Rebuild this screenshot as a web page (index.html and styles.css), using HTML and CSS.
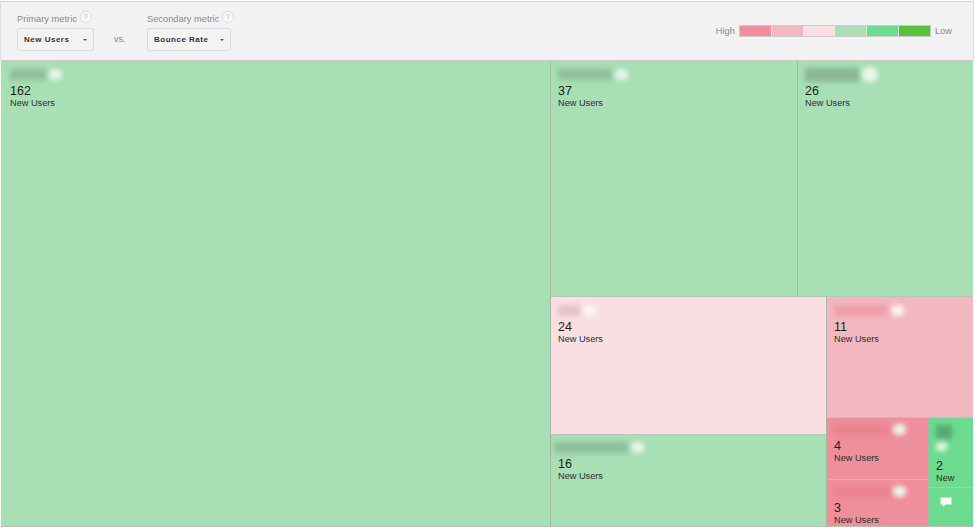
FILE: index.html
```html
<!DOCTYPE html>
<html lang="en">
<head>
<meta charset="utf-8">
<title>Treemap</title>
<link rel="stylesheet" href="styles.css">
</head>
<body>
<div class="app">
  <header class="toolbar">
    <div class="metric metric-primary">
      <div class="metric-label">Primary metric <span class="help">?</span></div>
      <div class="select select-primary">New Users <i class="caret"></i></div>
    </div>
    <div class="vs">vs.</div>
    <div class="metric">
      <div class="metric-label">Secondary metric <span class="help">?</span></div>
      <div class="select select-secondary">Bounce Rate <i class="caret"></i></div>
    </div>
    <div class="legend">
      <span>High</span>
      <div class="scale"><i class="s1"></i><i class="s2"></i><i class="s3"></i><i class="s4"></i><i class="s5"></i><i class="s6"></i></div>
      <span>Low</span>
    </div>
  </header>
  <main class="map">
    <section class="cell green big">
      <div class="blur"><i class="bar b-a g"></i><i class="dot"></i></div>
      <div class="num">162</div><div class="unit">New Users</div>
    </section>
    <div class="right">
      <div class="row top">
        <section class="cell green c37">
          <div class="blur"><i class="bar b-b g"></i><i class="dot"></i></div>
          <div class="num">37</div><div class="unit">New Users</div>
        </section>
        <section class="cell green c26">
          <div class="blur"><i class="bar b-b g2"></i><i class="dot dot-l"></i></div>
          <div class="num">26</div><div class="unit">New Users</div>
        </section>
      </div>
      <div class="row lower">
        <div class="col mid">
          <section class="cell pale c24">
            <div class="blur"><i class="bar b-c p"></i><i class="dot dot-f"></i></div>
            <div class="num">24</div><div class="unit">New Users</div>
          </section>
          <section class="cell green c16">
            <div class="blur shift"><i class="bar b-d g"></i><i class="dot"></i></div>
            <div class="num">16</div><div class="unit">New Users</div>
          </section>
        </div>
        <div class="col side">
          <section class="cell rose c11">
            <div class="blur"><i class="bar b-b r"></i><i class="dot dot-f"></i></div>
            <div class="num">11</div><div class="unit">New Users</div>
          </section>
          <div class="row small">
            <div class="col reds">
              <section class="cell red c4">
                <div class="blur"><i class="bar b-e r2"></i><i class="dot"></i></div>
                <div class="num">4</div><div class="unit">New Users</div>
              </section>
              <section class="cell red c3">
                <div class="blur"><i class="bar b-e r2"></i><i class="dot"></i></div>
                <div class="num">3</div><div class="unit">New Users</div>
              </section>
            </div>
            <div class="col greens">
              <section class="cell mint c2">
                <div class="blur stack"><i class="bar b-f g3"></i><i class="dot"></i></div>
                <div class="num">2</div><div class="unit">New</div>
              </section>
              <div class="cell mint chat">
                <svg class="chat-icon" width="12" height="11" viewBox="0 0 12 11"><path d="M0.5 0.5H11.5V7.5H5.5L3 10V7.5H0.5Z" fill="#fff"/></svg>
              </div>
            </div>
          </div>
        </div>
      </div>
    </div>
  </main>
</div>
</body>
</html>
```
FILE: styles.css
```css
* { box-sizing: border-box; }
html, body { margin: 0; background: #fff; }
body { font-family: "Liberation Sans", Arial, sans-serif; color: #222; height: 530px; overflow: hidden; }
.app { width: 974px; height: 527px; padding: 1px 1px 0 1px; display: flex; flex-direction: column; }
.toolbar { height: 60px; background: #f2f2f2; border-top: 1px solid #d4d4d4; border-bottom: 1px solid #c8c8c8; display: flex; padding-left: 16px; padding-right: 21px; flex: none; box-shadow: -1px 0 0 #ddd, 1px 0 0 #ddd; }
.metric { padding-top: 9px; }
.metric-primary { width: 89px; }
.metric-label { font-size: 9.3px; line-height: 14px; color: #8a8a8a; white-space: nowrap; }
.help { display: inline-block; width: 12px; height: 12px; border-radius: 50%; background: #fafafa; border: 1px solid #ddd; color: #aaa; font-size: 7px; line-height: 10px; text-align: center; vertical-align: 3px; }
.select { margin-top: 2px; height: 23px; border: 1px solid #dcdcdc; border-radius: 2px; background: #f3f3f3; font-size: 8px; font-weight: bold; color: #333; letter-spacing: .5px; line-height: 21px; padding-left: 6px; display: flex; align-items: center; position: relative; }
.select-primary { width: 77px; }
.select-secondary { width: 84px; }
.caret { position: absolute; right: 6px; top: 10px; border: 2.5px solid transparent; border-top-color: #555; border-bottom: 0; }
.vs { width: 41px; padding-top: 32px; font-size: 9px; color: #888; padding-left: 8px; }
.legend { margin-left: auto; display: flex; align-items: center; gap: 4px; height: 20px; margin-top: 19px; font-size: 9.3px; color: #8a8a8a; }
.scale { display: flex; width: 192px; height: 12px; border: 1px solid #ccc; }
.scale i { flex: 1; border-right: 1px solid #e8e8e8; }
.scale i:last-child { border-right: 0; }
.s1 { background: #ef8f9b; } .s2 { background: #f3b7bf; } .s3 { background: #f9dfe2; }
.s4 { background: #a8dfb4; } .s5 { background: #6ddb8f; } .s6 { background: #5abf3f; }
.map { flex: 1; display: flex; min-height: 0; background: #a8dfb4; border-bottom: 1px solid #bdbdbd; }
.cell { padding: 7px 0 0 7px; overflow: hidden; border-left: 1px solid #a3b8a6; border-top: 1px solid #b4c6b6; min-width: 0; }
.green { background: #a8dfb4; } .pale { background: #f9dfe2; } .rose { background: #f3b7bf; }
.red { background: #ef8f9b; } .mint { background: #6ddb8f; }
.big { width: 549px; flex: none; border-left: 0; border-top: 0; padding-left: 9px; padding-top: 7px; }
.right { flex: 1; display: flex; flex-direction: column; min-width: 0; }
.row { display: flex; min-height: 0; }
.col { display: flex; flex-direction: column; min-width: 0; }
.top { height: 235px; flex: none; }
.top .cell { border-top: 0; padding-top: 7px; }
.c37 { width: 247px; flex: none; }
.c26 { flex: 1; }
.lower { flex: 1; }
.mid { width: 276px; flex: none; }
.c24 { height: 138px; flex: none; }
.c16 { flex: 1; padding-top: 6px; }
.side { flex: 1; }
.c11 { height: 121px; flex: none; }
.small { flex: 1; }
.reds { width: 102px; flex: none; }
.c4 { height: 62px; flex: none; padding-top: 5px; }
.c3 { flex: 1; padding-top: 5px; }
.greens { flex: 1; }
.c2 { height: 70px; flex: none; padding-top: 5px; }
.chat { flex: 1; display: flex; justify-content: center; padding: 9px 0 0; }
.chat-icon { display: block; margin-left: -10px; }
.blur { display: flex; align-items: center; gap: 3px; height: 13px; filter: blur(2.6px); margin-bottom: 3px; }
.shift { margin-left: -4px; }
.bar { display: block; height: 11px; }
.dot { display: block; width: 13px; height: 11px; border-radius: 40%; background: #e8f5ea; flex: none; }
.dot-l { width: 16px; height: 15px; }
.dot-f { background: #fdf3f4; }
.stack { flex-direction: column; align-items: flex-start; height: 28px; gap: 3px; margin-top: 2px; margin-bottom: 6px; }
.b-a { width: 36px; } .b-b { width: 54px; } .b-c { width: 22px; } .b-d { width: 74px; } .b-e { width: 56px; } .b-f { width: 16px; height: 14px; }
.g { background: #8fbf9b; } .g2 { background: #8cb696; height: 14px; } .g3 { background: #58a875; }
.p { background: #e3c2c6; } .r { background: #ee9fa9; } .r2 { background: #ea8290; }
.stack .dot { width: 11px; height: 9px; }
.num { font-size: 12.5px; line-height: 15px; color: #1c1c1c; }
.unit { font-size: 9.2px; line-height: 12px; margin-top: -2px; color: #2e2e2e; white-space: nowrap; }
```
